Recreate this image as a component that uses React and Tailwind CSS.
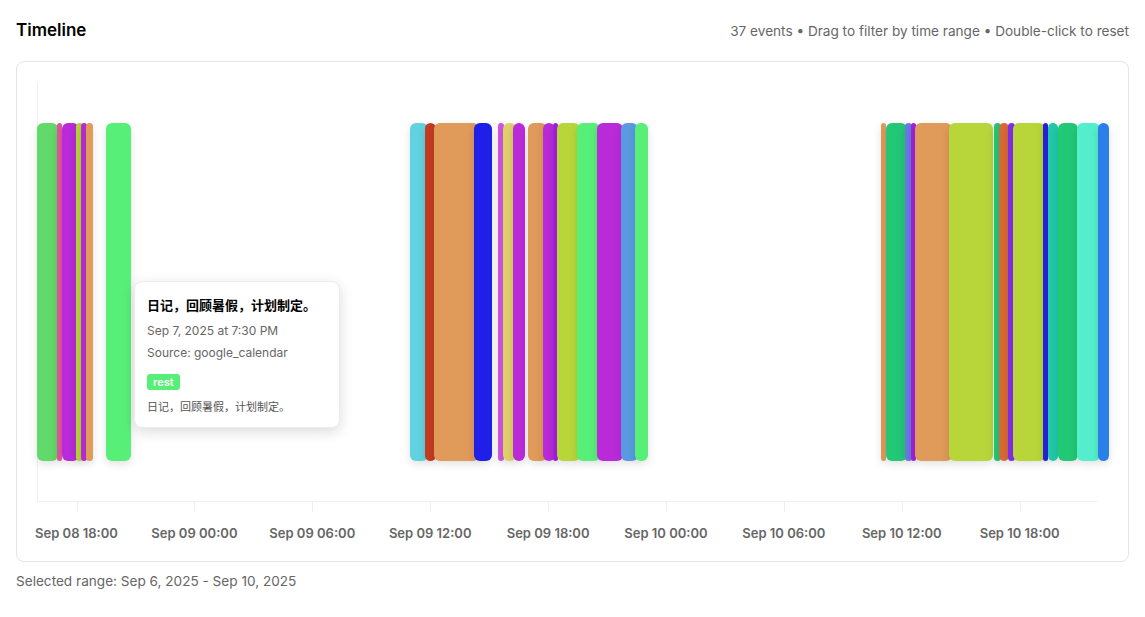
import React from 'react';

// [left, right, color] in page pixels
const events = [
  [37, 58, '#62d96b'],
  [57, 62, '#e055a0'],
  [62, 79, '#b92bd9'],
  [76, 83, '#b8d63a'],
  [81, 87, '#b92bd9'],
  [86, 93, '#e09a5a'],
  [106, 131, '#58ef78'],
  [410, 428, '#62d2e0'],
  [425, 436, '#c23b22'],
  [434, 479, '#e09a5a'],
  [474, 492, '#1f1fe8'],
  [498, 504, '#d055e0'],
  [503, 516, '#e0d06a'],
  [513, 525, '#b92bd9'],
  [528, 547, '#e09a5a'],
  [543, 555, '#b92bd9'],
  [553, 558, '#a020e0'],
  [557, 580, '#b8d63a'],
  [577, 600, '#58ef78'],
  [597, 623, '#b92bd9'],
  [621, 638, '#5a9ae0'],
  [635, 648, '#58ef78'],
  [881, 886, '#e09a5a'],
  [886, 907, '#22c875'],
  [905, 912, '#6a7ae0'],
  [911, 916, '#a020e0'],
  [915, 952, '#e09a5a'],
  [949, 993, '#b8d63a'],
  [994, 1001, '#22c875'],
  [999, 1009, '#d86a35'],
  [1008, 1015, '#8030e8'],
  [1013, 1045, '#b8d63a'],
  [1043, 1048, '#2a1fe0'],
  [1048, 1058, '#20c8a8'],
  [1058, 1078, '#22c875'],
  [1077, 1100, '#55eecc'],
  [1098, 1109, '#2a80e8'],
];

const ticks = [
  'Sep 08 18:00',
  'Sep 09 00:00',
  'Sep 09 06:00',
  'Sep 09 12:00',
  'Sep 09 18:00',
  'Sep 10 00:00',
  'Sep 10 06:00',
  'Sep 10 12:00',
  'Sep 10 18:00',
];

const OX = 17;
const OY = 62;

export default function App() {
  return (
    <div className="min-h-screen bg-white p-4 text-[#111]" style={{ fontFamily: 'Inter, "Noto Sans CJK SC", sans-serif' }}>
      <div className="flex h-[30px] items-center justify-between">
        <h2 className="text-[17px] font-semibold text-black">Timeline</h2>
        <p className="text-[13.6px] text-[#666]">37 events • Drag to filter by time range • Double-click to reset</p>
      </div>

      <div className="relative mt-[15px] h-[501px] rounded-lg border border-[#e5e5e5] bg-white">
        {/* axes */}
        <div className="absolute left-[20px] top-[20px] h-[420px] w-px bg-[#efefef]" />
        <div className="absolute left-[20px] top-[439px] h-px w-[1060px] bg-[#efefef]" />

        {ticks.map((t, i) => {
          const x = 76.5 + 117.9 * i - OX;
          return (
            <React.Fragment key={t}>
              <div className="absolute top-[440px] h-[10px] w-px bg-[#efefef]" style={{ left: x }} />
              <div
                className="absolute top-[462px] w-[120px] -translate-x-1/2 text-center text-[13px] font-semibold text-[#666]"
                style={{ left: x }}
              >
                {t}
              </div>
            </React.Fragment>
          );
        })}

        {events.map(([l, r, c], i) => (
          <div
            key={i}
            className="absolute top-[61px] h-[338px] rounded-[6px] shadow-[0_3px_8px_rgba(0,0,0,0.12)]"
            style={{ left: l - OX, width: r - l, backgroundColor: c }}
          />
        ))}

        {/* tooltip */}
        <div
          className="absolute w-[206px] rounded-lg border border-[#ececec] bg-white px-3 pt-[14px] pb-3 shadow-[0_4px_14px_rgba(0,0,0,0.14)]"
          style={{ left: 134 - OX, top: 281 - OY }}
        >
          <div className="text-[13px] font-semibold leading-[18px] text-black">日记，回顾暑假，计划制定。</div>
          <div className="mt-[9px] text-[12px] leading-[16px] text-[#666]">Sep 7, 2025 at 7:30 PM</div>
          <div className="mt-[6px] text-[12px] leading-[16px] text-[#666]">Source: google_calendar</div>
          <div className="mt-[13px] flex">
            <span className="rounded-[3px] bg-[#58ef78] px-[6px] text-[11px] font-semibold leading-[16px] text-white">rest</span>
          </div>
          <div className="mt-[9px] text-[11px] leading-[16px] text-[#555]">日记，回顾暑假，计划制定。</div>
        </div>
      </div>

      <p className="mt-[9px] text-[13.6px] leading-5 text-[#666]">Selected range: Sep 6, 2025 - Sep 10, 2025</p>
    </div>
  );
}
